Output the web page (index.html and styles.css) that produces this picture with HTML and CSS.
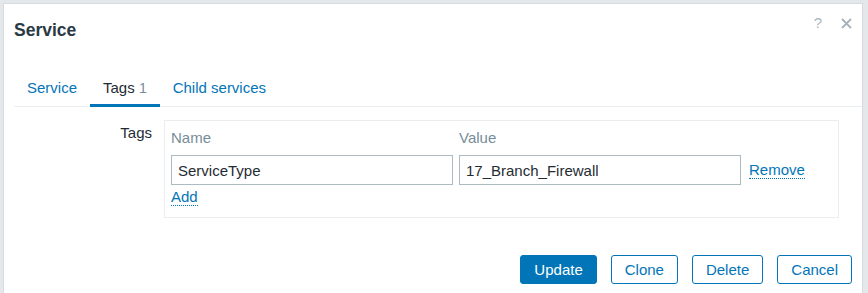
FILE: index.html
```html
<!DOCTYPE html>
<html lang="en">
<head>
    <meta charset="UTF-8">
    <title>Service</title>
    <link rel="stylesheet" href="styles.css">
</head>
<body>
    <div class="overlay-dialog">
        <div class="dashbrd-widget-head">
            <h4>Service</h4>
            <div class="head-controls">
                <button class="btn-help" title="Help">?</button>
                <button class="btn-close" title="Close">
                    <svg width="11" height="11" viewBox="0 0 11 11">
                        <path d="M1 1 L10 10 M10 1 L1 10" stroke="#a7b3ba" stroke-width="1.8" fill="none"/>
                    </svg>
                </button>
            </div>
        </div>

        <ul class="tabs-nav">
            <li><a href="#">Service</a></li>
            <li class="active"><a href="#">Tags <sup class="count">1</sup></a></li>
            <li><a href="#">Child services</a></li>
        </ul>

        <div class="form-grid">
            <label class="form-label">Tags</label>
            <div class="tags-table">
                <div class="tags-head">Name</div>
                <div class="tags-head">Value</div>
                <div></div>
                <input class="textbox" type="text" value="ServiceType">
                <input class="textbox" type="text" value="17_Branch_Firewall">
                <a class="link-action" href="#">Remove</a>
                <div class="add-row"><a class="link-action" href="#">Add</a></div>
            </div>
        </div>

        <div class="overlay-dialogue-footer">
            <button class="btn-main">Update</button>
            <button class="btn-alt">Clone</button>
            <button class="btn-alt">Delete</button>
            <button class="btn-alt">Cancel</button>
        </div>
    </div>
</body>
</html>
```

FILE: styles.css
```css
body, html {
    margin: 0;
    padding: 0;
}
body {
    background-color: #e4e8eb;
    font-family: "Liberation Sans", Arial, sans-serif;
    font-size: 15px;
    color: #1f2c33;
    padding: 3px 0 0 3px;
    height: 293px;
    box-sizing: border-box;
    overflow: hidden;
}
.overlay-dialog {
    width: 860px;
    min-height: 320px;
    background-color: #fff;
    border: 1px solid #d5dbdf;
    box-sizing: border-box;
}
.dashbrd-widget-head {
    display: flex;
    justify-content: space-between;
    align-items: flex-start;
    padding: 0 10px;
}
h4 {
    margin: 16px 0 0;
    font-size: 17.5px;
    line-height: 20px;
    font-weight: bold;
    color: #2a3a45;
}
.head-controls {
    display: flex;
    align-items: center;
    margin-top: 10px;
}
.head-controls button {
    background: none;
    border: 0;
    padding: 0;
    cursor: pointer;
    font-family: inherit;
}
.btn-help {
    color: #aab6bd;
    font-size: 15px;
    line-height: 18px;
    width: 10px;
    margin-right: 18px;
}
.btn-close {
    width: 11px;
    height: 11px;
    display: flex;
}
.tabs-nav {
    list-style: none;
    margin: 31px 0 0 10px;
    padding: 0;
    display: flex;
    border-bottom: 1px solid #ebeef0;
}
.tabs-nav li {
    padding: 8px 13px 7px;
    border-bottom: 3px solid transparent;
    margin-bottom: -1px;
    line-height: 18px;
}
.tabs-nav li a {
    color: #0275b8;
    text-decoration: none;
}
.tabs-nav li.active {
    border-bottom-color: #0275b8;
}
.tabs-nav li.active a {
    color: #1f2c33;
}
.count {
    color: #768d99;
    font-size: 14px;
    vertical-align: baseline;
}
.form-grid {
    display: grid;
    grid-template-columns: 148px 675px;
    column-gap: 12px;
    margin-top: 13px;
}
.form-label {
    text-align: right;
    line-height: 18px;
    padding-top: 4px;
}
.tags-table {
    border: 1px solid #ebeef0;
    display: grid;
    grid-template-columns: 282px 282px auto;
    column-gap: 6px;
    align-items: center;
    padding: 8px 6px 11px;
}
.tags-head {
    color: #768d99;
    line-height: 18px;
    margin-bottom: 8px;
}
.textbox {
    height: 30px;
    border: 1px solid #acbbc2;
    box-sizing: border-box;
    font-family: inherit;
    font-size: 15px;
    color: #1f2c33;
    padding: 0 6px;
    margin: 0;
    width: 100%;
}
.tags-table .textbox + .link-action {
    margin-left: 2px;
    justify-self: start;
}
.link-action {
    color: #0275b8;
    text-decoration: none;
    border-bottom: 1px dotted #0275b8;
    line-height: 17px;
}
.add-row {
    grid-column: 1 / 4;
    padding-top: 3px;
    line-height: 18px;
}
.overlay-dialogue-footer {
    display: flex;
    justify-content: flex-end;
    gap: 14px;
    padding: 37px 10px 0;
}
.overlay-dialogue-footer button {
    height: 29px;
    padding: 0 13px;
    font-family: inherit;
    font-size: 15px;
    border-radius: 3px;
    border: 1px solid #0275b8;
    cursor: pointer;
}
.btn-main {
    background-color: #0275b8;
    color: #fff;
}
.btn-alt {
    background-color: #fff;
    color: #0275b8;
}
```
